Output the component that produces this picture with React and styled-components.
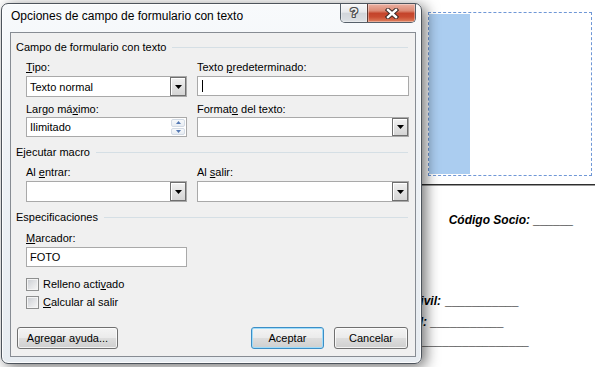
import React from "react";
import styled, { createGlobalStyle } from "styled-components";

const GlobalStyle = createGlobalStyle`
  html, body { margin: 0; padding: 0; background: #ffffff; }
  body {
    width: 599px; height: 367px; overflow: hidden;
    font-family: "Liberation Sans", Arial, sans-serif;
  }
  #root { width: 599px; height: 367px; }
`;

const Screen = styled.div`
  position: relative;
  width: 599px;
  height: 367px;
  overflow: hidden;
  background: #ffffff;
`;

/* ---------- document behind the dialog ---------- */

const Doc = styled.div`
  display: flex;
  flex-direction: column;
  align-items: flex-start;
  margin-left: 300px;
  width: 299px;
  padding-top: 12px;
  font-family: "Liberation Sans", Arial, sans-serif;
  font-size: 12px;
  font-weight: bold;
  font-style: italic;
  line-height: 15px;
  color: #000;
`;

const PhotoFrame = styled.div`
  box-sizing: border-box;
  margin-left: 128px;
  width: 164px;
  height: 164px;
  border: 1px dashed #6f97d6;
  padding: 1px 0;
`;

const PhotoFill = styled.div`
  width: 41px;
  height: 100%;
  background: #abcdf0;
`;

const Rule = styled.div`
  margin-top: 8px;
  margin-left: 120px;
  width: 175px;
  height: 0;
  border-top: 1px solid #2e2e2e;
  border-bottom: 1px solid #9a9a9a;
`;

const DocLine = styled.div`
  display: flex;
  margin-top: ${(p) => p.$gap}px;
  white-space: pre;
`;

const DocLabel = styled.span`
  display: block;
  width: ${(p) => p.$width}px;
  text-align: right;
  overflow: hidden;
  white-space: pre;
`;

const Blank = styled.span`
  font-style: normal;
  margin-left: ${(p) => p.$gap}px;
`;

/* ---------- dialog window ---------- */

const Dialog = styled.div`
  position: absolute;
  left: 1px;
  top: 3px;
  width: 421px;
  height: 361px;
  box-sizing: border-box;
  display: flex;
  flex-direction: column;
  padding: 0 5px 6px 8px;
  border: 1px solid #4d545c;
  border-radius: 7px;
  background: linear-gradient(180deg, #f8fafc 0%, #eef2f6 40%, #e7ecf1 100%);
  box-shadow: inset 0 0 0 1px rgba(255, 255, 255, 0.85),
    4px 3px 14px rgba(0, 0, 0, 0.55);
  font-family: "Liberation Sans", Arial, sans-serif;
  font-size: 11px;
  color: #000;
`;

const TitleBar = styled.div`
  display: flex;
  align-items: flex-start;
  height: 28px;
  flex: none;
`;

const Title = styled.div`
  margin-top: 5px;
  margin-left: 1px;
  font-size: 12px;
  line-height: 15px;
  color: #000;
  white-space: nowrap;
`;

const CaptionGroup = styled.div`
  margin-left: auto;
  display: flex;
  height: 19px;
  box-sizing: border-box;
  border: 1px solid #56606a;
  border-top: none;
  border-radius: 0 0 5px 5px;
  overflow: hidden;
`;

const CaptionButton = styled.div`
  width: ${(p) => p.$w}px;
  display: flex;
  align-items: center;
  justify-content: center;
  box-shadow: inset 0 0 0 1px rgba(255, 255, 255, 0.35);
  background: ${(p) =>
    p.$close
      ? "linear-gradient(180deg, #eab0a2 0%, #dc8a74 38%, #c4442b 52%, #c94c31 72%, #e0825f 100%)"
      : "linear-gradient(180deg, #f8f8f8 0%, #e7e9ec 45%, #d2d6db 52%, #dde1e5 100%)"};
  border-left: ${(p) => (p.$close ? "1px solid #5a3a34" : "none")};
`;

const HelpGlyph = styled.span`
  font: bold 13px/1 "Liberation Sans", Arial, sans-serif;
  color: #f4f4f4;
  margin-top: -1px;
  text-shadow: -1px 0 #4a4a4a, 1px 0 #4a4a4a, 0 -1px #4a4a4a, 0 1px #4a4a4a,
    -1px -1px #6a6a6a, 1px 1px #4a4a4a, -1px 1px #6a6a6a, 1px -1px #6a6a6a;
`;

const Panel = styled.div`
  flex: 1;
  display: flex;
  flex-direction: column;
  border: 1px solid #878c93;
  background: #f0f0f0;
`;

const GroupHeader = styled.div`
  display: flex;
  align-items: center;
  height: 15px;
  line-height: 15px;
  margin: ${(p) => p.$gap}px 7px 0 5px;
  white-space: nowrap;
`;

const HeaderLine = styled.div`
  flex: 1;
  height: 1px;
  margin-left: 6px;
  background: #d5dfe5;
`;

const FieldRow = styled.div`
  display: grid;
  grid-template-columns: 161px 212px;
  column-gap: 10px;
  align-items: start;
  margin: ${(p) => p.$gap}px 0 0 15px;
`;

const Field = styled.div`
  display: flex;
  flex-direction: column;
`;

const Label = styled.div`
  height: 14px;
  line-height: 14px;
  margin-bottom: ${(p) => p.$space}px;
  white-space: nowrap;
`;

const Key = styled.span`
  text-decoration: underline;
  text-underline-offset: 1px;
`;

const TextBox = styled.div`
  box-sizing: border-box;
  height: 20px;
  border: 1px solid #a9a9a9;
  background: #fff;
  display: flex;
  align-items: center;
  padding-left: 3px;
  line-height: 14px;
`;

const Caret = styled.span`
  display: block;
  width: 1px;
  height: 12px;
  margin-left: 1px;
  background: #000;
`;

const Combo = styled.div`
  box-sizing: border-box;
  height: ${(p) => p.$h}px;
  border: 1px solid #a9a9a9;
  background: #fff;
  display: flex;
  align-items: stretch;
`;

const ComboValue = styled.div`
  flex: 1;
  display: flex;
  align-items: center;
  padding-left: 3px;
  line-height: 14px;
`;

const DropButton = styled.div`
  box-sizing: border-box;
  width: 16px;
  display: flex;
  align-items: center;
  justify-content: center;
  border: 1px solid #6f6f6f;
  background: linear-gradient(180deg, #f2f2f2 0%, #e2e2e2 50%, #d5d5d5 100%);
  box-shadow: inset 1px 1px 0 #ffffff;
`;

const Spin = styled.div`
  width: 14px;
  display: flex;
  flex-direction: column;
  gap: 1px;
  padding: 1px 1px 1px 0;
`;

const SpinHalf = styled.div`
  flex: 1;
  display: flex;
  align-items: center;
  justify-content: center;
  border: 1px solid #d3dbe5;
  border-radius: 2px;
  background: linear-gradient(180deg, #f7f9fb, #e8edf3);
`;

const CheckRow = styled.label`
  display: flex;
  align-items: center;
  height: 14px;
  margin: ${(p) => p.$gap}px 0 0 15px;
  white-space: nowrap;
`;

const CheckBox = styled.span`
  box-sizing: border-box;
  width: 13px;
  height: 13px;
  margin-right: 4px;
  border: 1px solid #8e8f8f;
  background: linear-gradient(135deg, #c9ccd1 0%, #e4e5e7 55%, #f7f7f7 100%);
  box-shadow: inset 0 0 0 1px #f4f4f4;
`;

const ButtonRow = styled.div`
  display: flex;
  margin: 18px 7px 0 6px;
`;

const Button = styled.div`
  box-sizing: border-box;
  width: ${(p) => p.$w}px;
  height: 22px;
  margin-left: ${(p) => p.$gap || 0}px;
  display: flex;
  align-items: center;
  justify-content: center;
  border: 1px solid ${(p) => (p.$default ? "#3c8ec6" : "#707070")};
  border-radius: 3px;
  background: linear-gradient(180deg, #f4f4f4 0%, #ebebeb 48%, #dddddd 52%, #cfcfcf 100%);
  box-shadow: inset 0 0 0 1px
    ${(p) => (p.$default ? "#9fdcfa" : "rgba(255,255,255,0.75)")};
  white-space: nowrap;
`;

const Spacer = styled.div`
  flex: 1;
`;

const Triangle = ({ up, color = "#000", w = 7, h = 4 }) => (
  <svg width={w} height={h} viewBox={`0 0 ${w} ${h}`}>
    <path
      d={up ? `M0 ${h} L${w / 2} 0 L${w} ${h} Z` : `M0 0 L${w} 0 L${w / 2} ${h} Z`}
      fill={color}
    />
  </svg>
);

const CloseX = () => (
  <svg width="14" height="11" viewBox="0 0 14 11">
    <path d="M3 2 L11 9 M11 2 L3 9" stroke="#3b2b28" strokeWidth="4.4" strokeLinecap="square" />
    <path d="M3 2 L11 9 M11 2 L3 9" stroke="#ffffff" strokeWidth="2.4" strokeLinecap="square" />
  </svg>
);

const ComboBox = ({ h = 21, children }) => (
  <Combo $h={h}>
    <ComboValue>{children}</ComboValue>
    <DropButton>
      <Triangle />
    </DropButton>
  </Combo>
);

export default function App() {
  return (
    <>
      <GlobalStyle />
      <Screen>
        <Doc>
          <PhotoFrame>
            <PhotoFill />
          </PhotoFrame>
          <Rule />
          <DocLine $gap={27}>
            <DocLabel $width={230}>Código Socio:</DocLabel>
            <Blank $gap={3}>______</Blank>
          </DocLine>
          <DocLine $gap={66}>
            <DocLabel $width={141}>Estado civil:</DocLabel>
            <Blank $gap={4}>___________</Blank>
          </DocLine>
          <DocLine $gap={6}>
            <DocLabel $width={127}>Tel:</DocLabel>
            <Blank $gap={3}>___________</Blank>
          </DocLine>
          <DocLine $gap={4}>
            <Blank $gap={122}>________________</Blank>
          </DocLine>
        </Doc>

        <Dialog>
          <TitleBar>
            <Title>Opciones de campo de formulario con texto</Title>
            <CaptionGroup>
              <CaptionButton $w={26}>
                <HelpGlyph>?</HelpGlyph>
              </CaptionButton>
              <CaptionButton $w={47} $close>
                <CloseX />
              </CaptionButton>
            </CaptionGroup>
          </TitleBar>

          <Panel>
            <GroupHeader $gap={7}>
              Campo de formulario con texto
              <HeaderLine />
            </GroupHeader>
            <FieldRow $gap={5}>
              <Field>
                <Label $space={2}>
                  <Key>T</Key>ipo:
                </Label>
                <ComboBox>Texto normal</ComboBox>
              </Field>
              <Field>
                <Label $space={2}>
                  Texto <Key>p</Key>redeterminado:
                </Label>
                <TextBox>
                  <Caret />
                </TextBox>
              </Field>
            </FieldRow>
            <FieldRow $gap={5}>
              <Field>
                <Label $space={1}>
                  Largo má<Key>x</Key>imo:
                </Label>
                <Combo $h={20}>
                  <ComboValue>Ilimitado</ComboValue>
                  <Spin>
                    <SpinHalf>
                      <Triangle up w={5} h={3} color="#5479b4" />
                    </SpinHalf>
                    <SpinHalf>
                      <Triangle w={5} h={3} color="#5479b4" />
                    </SpinHalf>
                  </Spin>
                </Combo>
              </Field>
              <Field>
                <Label $space={1}>
                  Format<Key>o</Key> del texto:
                </Label>
                <ComboBox h={20} />
              </Field>
            </FieldRow>

            <GroupHeader $gap={8}>
              Ejecutar macro
              <HeaderLine />
            </GroupHeader>
            <FieldRow $gap={5}>
              <Field>
                <Label $space={2}>
                  Al <Key>e</Key>ntrar:
                </Label>
                <ComboBox />
              </Field>
              <Field>
                <Label $space={2}>
                  Al <Key>s</Key>alir:
                </Label>
                <ComboBox />
              </Field>
            </FieldRow>

            <GroupHeader $gap={8}>
              Especificaciones
              <HeaderLine />
            </GroupHeader>
            <FieldRow $gap={6}>
              <Field>
                <Label $space={2}>
                  <Key>M</Key>arcador:
                </Label>
                <TextBox>FOTO</TextBox>
              </Field>
            </FieldRow>
            <CheckRow $gap={10}>
              <CheckBox />
              Relleno acti<Key>v</Key>ado
            </CheckRow>
            <CheckRow $gap={4}>
              <CheckBox />
              <Key>C</Key>alcular al salir
            </CheckRow>

            <ButtonRow>
              <Button $w={101}>Agregar ayuda...</Button>
              <Spacer />
              <Button $w={73} $default>
                Aceptar
              </Button>
              <Button $w={74} $gap={10}>
                Cancelar
              </Button>
            </ButtonRow>
          </Panel>
        </Dialog>
      </Screen>
    </>
  );
}
